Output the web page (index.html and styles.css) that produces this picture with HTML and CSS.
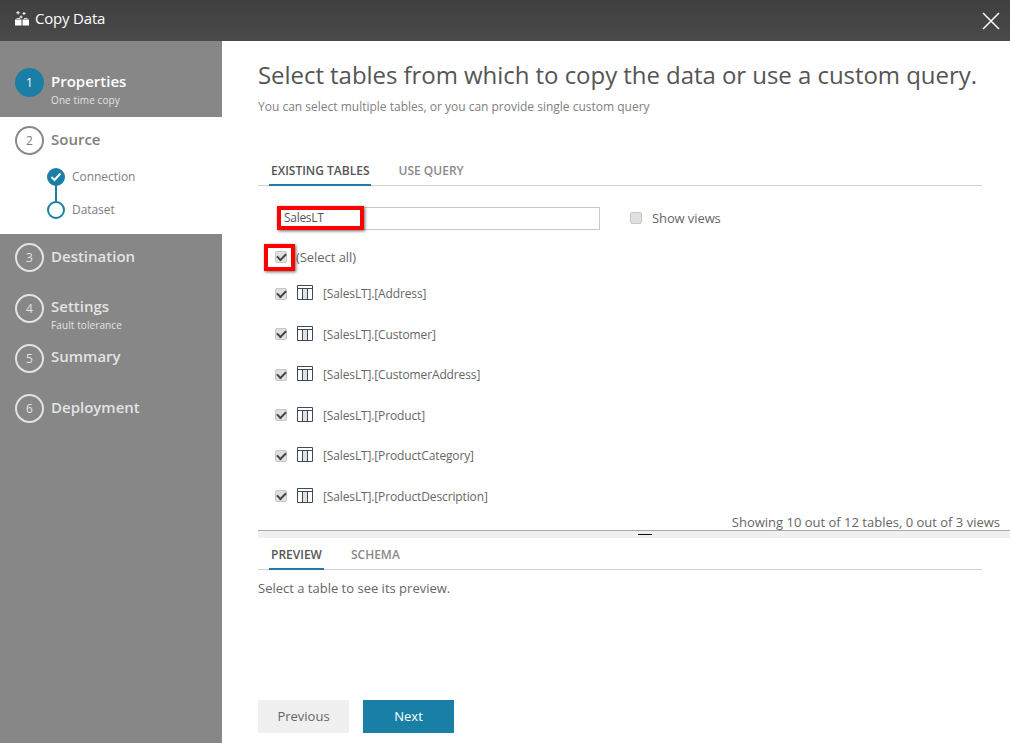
FILE: index.html
```html
<!DOCTYPE html>
<html lang="en">
<head>
  <meta charset="UTF-8" />
  <meta name="viewport" content="width=device-width, initial-scale=1.0" />
  <title>Copy Data</title>
  <link rel="stylesheet" href="styles.css">
</head>
<body>
  <header class="topbar">
    <svg class="logo" width="16" height="15" viewBox="0 0 16 15">
      <path d="M1 8.500h6.500v6H1zM8.500 8.500H15v6H8.500z" fill="#fff"/>
      <path d="M2.500 7.500h3.500M10 7.500h3.500" stroke="#ddd" stroke-width="1" fill="none"/>
      <path d="M4 0v3.500M2.300 1.700h3.400M10 1v3M8.500 2.500h3M7 4.500v3M5.500 6h3" stroke="#fff" stroke-width="1" fill="none"/>
    </svg>
    <span class="topbar-title">Copy Data</span>
    <svg class="close" width="18" height="18" viewBox="0 0 18 18">
      <path d="M1 1l16 16M17 1L1 17" stroke="#fff" stroke-width="1.5" fill="none"/>
    </svg>
  </header>

  <div class="wizard">
    <nav class="steps">
      <div class="step step-first">
        <span class="num num-active">1</span>
        <div>
          <div class="step-name step-name-active">Properties</div>
          <div class="step-sub">One time copy</div>
        </div>
      </div>

      <div class="step-open">
        <div class="step step-source">
          <span class="num num-dark">2</span>
          <div class="step-name step-name-dark">Source</div>
        </div>
        <div class="substeps">
          <div class="substep">
            <span class="dot dot-done">
              <svg width="12" height="10" viewBox="0 0 12 10"><path d="M1.500 5l3 3 6-6.500" stroke="#fff" stroke-width="2" fill="none"/></svg>
            </span>
            <span>Connection</span>
          </div>
          <div class="substep">
            <span class="dot"></span>
            <span>Dataset</span>
          </div>
        </div>
      </div>

      <div class="step step-dest">
        <span class="num">3</span>
        <div class="step-name">Destination</div>
      </div>
      <div class="step step-settings">
        <span class="num">4</span>
        <div>
          <div class="step-name">Settings</div>
          <div class="step-sub">Fault tolerance</div>
        </div>
      </div>
      <div class="step step-summary">
        <span class="num">5</span>
        <div class="step-name">Summary</div>
      </div>
      <div class="step step-deploy">
        <span class="num">6</span>
        <div class="step-name">Deployment</div>
      </div>
    </nav>

    <main class="content">
      <h1>Select tables from which to copy the data or use a custom query.</h1>
      <p class="hint">You can select multiple tables, or you can provide single custom query</p>

      <div class="tabs tabs-top">
        <span class="tab tab-active">EXISTING TABLES</span>
        <span class="tab">USE QUERY</span>
      </div>

      <div class="filter-row">
        <div class="filter-box">SalesLT<span class="callout callout-input"></span></div>
        <label class="views"><span class="check"></span>Show views</label>
      </div>

      <div class="select-all">
        <span class="check check-on"><span class="callout callout-check"></span></span>
        <span>(Select all)</span>
      </div>

      <ul class="tables">
        <li><span class="check check-on"></span><svg class="grid-icon" width="16" height="15" viewBox="0 0 16 15"><path d="M5.500 4h5v10h-5z" fill="#dfe2e5"/><path d="M.5.5h15v14H.5zM.5 3.500h15M5.500 3.500v11M10.500 3.500v11" stroke="#3c4a5a" fill="none"/></svg>[SalesLT].[Address]</li>
        <li><span class="check check-on"></span><svg class="grid-icon" width="16" height="15" viewBox="0 0 16 15"><path d="M5.500 4h5v10h-5z" fill="#dfe2e5"/><path d="M.5.5h15v14H.5zM.5 3.500h15M5.500 3.500v11M10.500 3.500v11" stroke="#3c4a5a" fill="none"/></svg>[SalesLT].[Customer]</li>
        <li><span class="check check-on"></span><svg class="grid-icon" width="16" height="15" viewBox="0 0 16 15"><path d="M5.500 4h5v10h-5z" fill="#dfe2e5"/><path d="M.5.5h15v14H.5zM.5 3.500h15M5.500 3.500v11M10.500 3.500v11" stroke="#3c4a5a" fill="none"/></svg>[SalesLT].[CustomerAddress]</li>
        <li><span class="check check-on"></span><svg class="grid-icon" width="16" height="15" viewBox="0 0 16 15"><path d="M5.500 4h5v10h-5z" fill="#dfe2e5"/><path d="M.5.5h15v14H.5zM.5 3.500h15M5.500 3.500v11M10.500 3.500v11" stroke="#3c4a5a" fill="none"/></svg>[SalesLT].[Product]</li>
        <li><span class="check check-on"></span><svg class="grid-icon" width="16" height="15" viewBox="0 0 16 15"><path d="M5.500 4h5v10h-5z" fill="#dfe2e5"/><path d="M.5.5h15v14H.5zM.5 3.500h15M5.500 3.500v11M10.500 3.500v11" stroke="#3c4a5a" fill="none"/></svg>[SalesLT].[ProductCategory]</li>
        <li><span class="check check-on"></span><svg class="grid-icon" width="16" height="15" viewBox="0 0 16 15"><path d="M5.500 4h5v10h-5z" fill="#dfe2e5"/><path d="M.5.5h15v14H.5zM.5 3.500h15M5.500 3.500v11M10.500 3.500v11" stroke="#3c4a5a" fill="none"/></svg>[SalesLT].[ProductDescription]</li>
      </ul>

      <div class="count">Showing 10 out of 12 tables, 0 out of 3 views</div>
      <div class="splitter"><span class="grip"></span></div>

      <div class="tabs tabs-bottom">
        <span class="tab tab-active">PREVIEW</span>
        <span class="tab">SCHEMA</span>
      </div>
      <p class="preview-note">Select a table to see its preview.</p>

      <div class="buttons">
        <button type="button" class="btn">Previous</button>
        <button type="button" class="btn btn-next">Next</button>
      </div>
    </main>
  </div>
</body>
</html>
```

FILE: styles.css
```css
* {
  box-sizing: border-box;
}

html, body {
  height: 100%;
}

body {
  margin: 0;
  overflow: hidden;
  background-color: #fff;
  color: #666;
  font-family: "Open Sans", "Noto Sans", sans-serif;
  font-size: 12px;
}

.topbar {
  display: flex;
  align-items: center;
  height: 41px;
  padding: 0 10px 0 14px;
  background: linear-gradient(#3f3f3f, #4a4a4a);
  color: #fff;
}

.logo {
  margin: -4px 5px 0 0;
}

.topbar-title {
  flex: 1;
  margin-top: -5px;
  font-size: 15px;
  letter-spacing: -0.2px;
}

.wizard {
  display: flex;
  height: 702px;
}

/* left column */
.steps {
  flex: none;
  width: 222px;
  background-color: #878787;
  color: #e3e3e3;
}

.step {
  display: flex;
  padding-left: 15px;
}

.step-first {
  align-items: flex-start;
  height: 76px;
  padding-top: 27px;
  background-color: #878787;
}

.step-open {
  height: 117px;
  background-color: #fff;
}

.step-source {
  height: 43px;
  padding-top: 9px;
}

.step-dest {
  height: 60px;
  padding-top: 9px;
}

.step-settings {
  height: 50px;
}

.step-settings .step-name {
  margin-top: -1px;
}

.step-summary {
  height: 50px;
}

.step-summary .step-name {
  margin-top: -1px;
}

.num {
  display: flex;
  flex: none;
  align-items: center;
  justify-content: center;
  width: 29px;
  height: 29px;
  margin-right: 7px;
  border: 2px solid #e3e3e3;
  border-radius: 50%;
  font-size: 12px;
}

.num-active {
  border-color: #1a7fa6;
  background-color: #1a7fa6;
  color: #fff;
}

.num-dark {
  border-color: #8a8a8a;
  color: #808080;
}

.step-name {
  font-size: 15px;
  font-weight: 600;
  line-height: 26px;
}

.step-name-active {
  color: #fff;
}

.step-name-dark {
  color: #808080;
}

.step-sub {
  margin-top: -1px;
  font-size: 10px;
  line-height: 14px;
  letter-spacing: 0.1px;
}

.substeps {
  padding-left: 47px;
}

.substep {
  position: relative;
  display: flex;
  align-items: center;
  height: 33px;
  color: #808080;
  font-size: 12px;
  letter-spacing: -0.05px;
}

.dot {
  display: flex;
  align-items: center;
  justify-content: center;
  width: 18px;
  height: 18px;
  margin-right: 7px;
  border: 2px solid #1a7fa6;
  border-radius: 50%;
}

.dot-done {
  background-color: #1a7fa6;
}

.dot-done::after {
  content: "";
  position: absolute;
  left: 8px;
  top: 24px;
  width: 2px;
  height: 18px;
  background-color: #1a7fa6;
}

/* right column */
.content {
  flex: 1;
  min-width: 0;
  padding: 16px 10px 0 36px;
}

h1 {
  margin: 0;
  color: #555;
  font-size: 24px;
  font-weight: 400;
  line-height: 36px;
  white-space: nowrap;
  letter-spacing: -0.05px;
}

.hint {
  margin: 5px 0 0;
  color: #808080;
  font-size: 12px;
  line-height: 18px;
}

.tabs {
  display: flex;
  gap: 28px;
  width: 724px;
  height: 30px;
  padding-left: 12px;
  border-bottom: 1px solid #d4d4d4;
  font-size: 12px;
  font-weight: 600;
}

.tabs-top {
  margin-top: 40px;
}

.tabs-bottom {
  gap: 27px;
  margin-top: 2px;
}

.tab {
  height: 30px;
  padding-top: 6px;
  color: #8a8a8a;
}

.tab-active {
  margin-left: -1px;
  padding-right: 1px;
  padding-left: 2px;
  border-bottom: 2px solid #1a7fa6;
  color: #555;
}

.tabs-bottom .tab-active {
  padding-right: 2px;
}

.filter-row {
  display: flex;
  align-items: center;
  margin-top: 21px;
  padding-left: 20px;
}

.filter-box {
  position: relative;
  width: 322px;
  height: 23px;
  padding-left: 5px;
  border: 1px solid #c8c8c8;
  color: #555;
  line-height: 20px;
  letter-spacing: -0.3px;
}

.views {
  display: flex;
  align-items: center;
  gap: 10px;
  margin-top: -1px;
  margin-left: 30px;
  font-size: 13px;
  line-height: 16px;
  letter-spacing: -0.1px;
}

.check {
  position: relative;
  display: inline-flex;
  flex: none;
  align-items: center;
  justify-content: center;
  width: 12px;
  height: 12px;
  border: 1px solid #c8c8c8;
  border-radius: 2px;
  background-color: #e0e0e0;
}

.check-on::before {
  content: "";
  width: 7px;
  height: 4px;
  margin-top: -2px;
  border-bottom: 2px solid #444;
  border-left: 2px solid #444;
  transform: rotate(-45deg);
}

.callout {
  position: absolute;
  border: 4px solid #f00;
  box-shadow: 1px 1px 3px rgba(0, 0, 0, 0.6);
}

.callout-input {
  left: -2px;
  top: -2px;
  width: 87px;
  height: 24px;
}

.callout-check {
  left: -12px;
  top: -8px;
  width: 31px;
  height: 27px;
}

.select-all {
  display: flex;
  align-items: center;
  gap: 9px;
  height: 20px;
  margin-top: 17px;
  padding-left: 17px;
  font-size: 13px;
  letter-spacing: -0.05px;
}

.tables {
  margin: 6.5px 0 0;
  padding: 0 0 0 17px;
  list-style: none;
  letter-spacing: -0.13px;
}

.tables li {
  display: flex;
  align-items: center;
  height: 40.5px;
}

.grid-icon {
  margin: -2px 10px 0 10px;
}

.count {
  margin-top: -2px;
  color: #666;
  font-size: 13px;
  line-height: 14px;
  text-align: right;
}

.splitter {
  display: flex;
  justify-content: center;
  height: 8px;
  margin-top: 1px;
  margin-right: -10px;
  padding-left: 22px;
  border-top: 1px solid #aaa;
  background-color: #f0f0f0;
}

.grip {
  width: 14px;
  height: 1px;
  margin-top: 3px;
  background-color: #111;
}

.preview-note {
  margin: 9px 0 0;
  font-size: 13px;
  line-height: 18px;
}

.buttons {
  display: flex;
  gap: 14px;
  margin-top: 103px;
}

.btn {
  width: 91px;
  height: 33px;
  border: none;
  background-color: #f0f0f0;
  color: #666;
  font: inherit;
  font-size: 13px;
}

.btn-next {
  background-color: #1a7fa6;
  color: #fff;
}
```
